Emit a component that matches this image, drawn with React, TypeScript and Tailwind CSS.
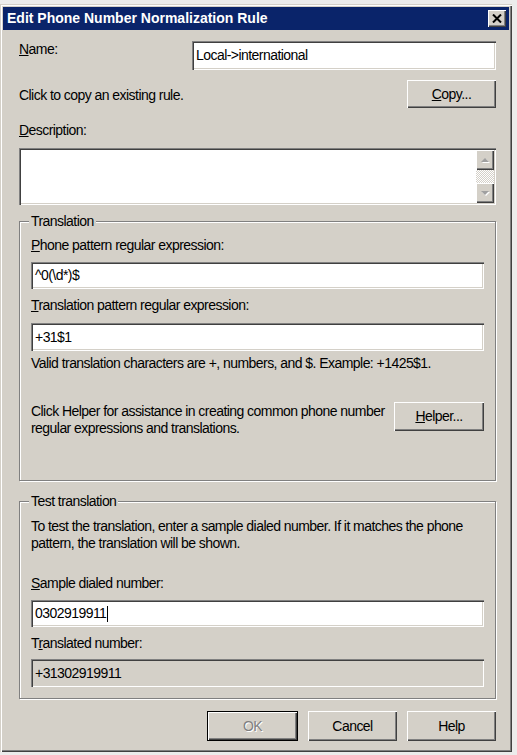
const raised =
  'shadow-[inset_1px_1px_0_#ffffff,inset_-1px_-1px_0_#404040,inset_-2px_-2px_0_#808080]'
const sunken =
  'shadow-[inset_1px_1px_0_#808080,inset_2px_2px_0_#404040,inset_-1px_-1px_0_#ffffff,inset_-2px_-2px_0_#d4d0c8]'

type FieldProps = {
  value?: string
  className: string
  readOnly?: boolean
  caret?: boolean
}

function Field({ value, className, readOnly, caret }: FieldProps) {
  return (
    <div
      className={`flex items-center pl-[4px] ${sunken} ${readOnly ? 'bg-[#d4d0c8]' : 'bg-white'} ${className}`}
    >
      <span className="whitespace-nowrap leading-[17px]">{value}</span>
      {caret && <span className="ml-px h-[16px] w-px bg-black" />}
    </div>
  )
}

type ButtonProps = {
  children: React.ReactNode
  className?: string
}

function Button({ children, className = '' }: ButtonProps) {
  return (
    <button
      type="button"
      className={`flex h-[28px] w-[89px] shrink-0 items-center justify-center bg-[#d4d0c8] ${raised} ${className}`}
    >
      {children}
    </button>
  )
}

function Legend({ children }: { children: React.ReactNode }) {
  return <legend className="-ml-[2px] bg-[#d4d0c8] px-[2px] leading-[17px]">{children}</legend>
}

function ScrollArrow({ down }: { down?: boolean }) {
  return (
    <div className={`flex h-[20px] w-[18px] items-center justify-center bg-[#d4d0c8] ${raised}`}>
      <svg width="9" height="5" viewBox="0 0 9 5">
        {down ? (
          <>
            <polygon points="1,1 9,1 5,5" fill="#ffffff" />
            <polygon points="0,0 8,0 4,4" fill="#a0a0a0" />
          </>
        ) : (
          <>
            <polygon points="1,5 9,5 5,1" fill="#ffffff" />
            <polygon points="0,4 8,4 4,0" fill="#a0a0a0" />
          </>
        )}
      </svg>
    </div>
  )
}

export default function App() {
  return (
    <div className="h-[755px] w-[517px] overflow-hidden bg-[#ececec] pt-[4px] font-['Liberation_Sans',Arial,sans-serif] text-[14px] tracking-[-0.55px] text-black">
      <div className="h-[748px] w-[512px] bg-[#d4d0c8] px-[3px] pt-[3px] shadow-[inset_1px_1px_0_#d4d0c8,inset_2px_2px_0_#ffffff,inset_-1px_-1px_0_#404040,inset_-2px_-2px_0_#808080]">
        {/* title bar */}
        <div className="flex h-[23px] items-center justify-between bg-[#0a246a] pl-[4px] pr-[3px]">
          <span className="text-[14px] font-bold tracking-normal text-white">
            Edit Phone Number Normalization Rule
          </span>
          <div className={`flex h-[17px] w-[18px] items-center justify-center bg-[#d4d0c8] ${raised}`}>
            <svg width="10" height="9" viewBox="0 0 10 9">
              <path d="M1 0.5 L9 8.5 M9 0.5 L1 8.5" stroke="#000" strokeWidth="2" />
            </svg>
          </div>
        </div>

        <div className="flex flex-col pl-[16px] pr-[13px]">
          <div className="mt-[11px] flex h-[29px] items-center justify-between">
            <span className="self-start leading-[17px]">
              <span className="underline">N</span>ame:
            </span>
            <Field value="Local->international" className="h-[29px] w-[304px]" />
          </div>

          <div className="mt-[10px] flex h-[28px] items-center justify-between">
            <span className="pt-[3px] leading-[17px]">Click to copy an existing rule.</span>
            <Button>
              <span className="underline">C</span>opy...
            </Button>
          </div>

          <div className="mt-[14px] leading-[17px]">
            <span className="underline">D</span>escription:
          </div>
          <div className={`mt-[9px] flex h-[57px] justify-end bg-white py-[2px] pr-[2px] ${sunken}`}>
            <div className="flex w-[18px] flex-col justify-between bg-[repeating-conic-gradient(#d4d0c8_0_25%,#ffffff_0_50%)] bg-[length:2px_2px]">
              <ScrollArrow />
              <ScrollArrow down />
            </div>
          </div>

          <fieldset className="mt-[8px] min-w-0 border border-[#808080] pb-[43px] pl-[11px] pr-[11px] shadow-[inset_1px_1px_0_#ffffff,1px_1px_0_#ffffff]">
            <Legend>Translation</Legend>
            <div className="pt-[7px] leading-[17px]">
              <span className="underline">P</span>hone pattern regular expression:
            </div>
            <Field value="^0(\d*)$" className="mt-[8px] h-[27px]" />
            <div className="mt-[8px] leading-[17px]">
              <span className="underline">T</span>ranslation pattern regular expression:
            </div>
            <Field value="+31$1" className="mt-[9px] h-[28px]" />
            <div className="mt-[4px] whitespace-nowrap leading-[17px]">
              Valid translation characters are +, numbers, and $. Example: +1425$1.
            </div>
            <div className="mt-[30px] flex items-start justify-between">
              <div className="whitespace-nowrap pt-px leading-[17px]">
                Click Helper for assistance in creating common phone number
                <br />
                regular expressions and translations.
              </div>
              <Button className="h-[29px] w-[90px]">
                <span className="underline">H</span>elper...
              </Button>
            </div>
          </fieldset>

          <fieldset className="mt-[12px] min-w-0 border border-[#808080] pb-[11px] pl-[11px] pr-[11px] shadow-[inset_1px_1px_0_#ffffff,1px_1px_0_#ffffff]">
            <Legend>Test translation</Legend>
            <div className="whitespace-nowrap pt-[8px] leading-[17px]">
              To test the translation, enter a sample dialed number. If it matches the phone
              <br />
              pattern, the translation will be shown.
            </div>
            <div className="mt-[23px] leading-[17px]">
              <span className="underline">S</span>ample dialed number:
            </div>
            <Field value="0302919911" caret className="mt-[8px] h-[27px]" />
            <div className="mt-[8px] leading-[17px]">
              T<span className="underline">r</span>anslated number:
            </div>
            <Field value="+31302919911" readOnly className="mt-[7px] h-[28px]" />
          </fieldset>

          <div className="mt-[12px] flex justify-end gap-[10px]">
            <div className="border border-black">
              <Button className="h-[28px] w-[87px]">
                <span className="text-[#808080] [text-shadow:1px_1px_0_#ffffff]">OK</span>
              </Button>
            </div>
            <Button className="h-[30px]">Cancel</Button>
            <Button className="h-[30px]">Help</Button>
          </div>
        </div>
      </div>
    </div>
  )
}
